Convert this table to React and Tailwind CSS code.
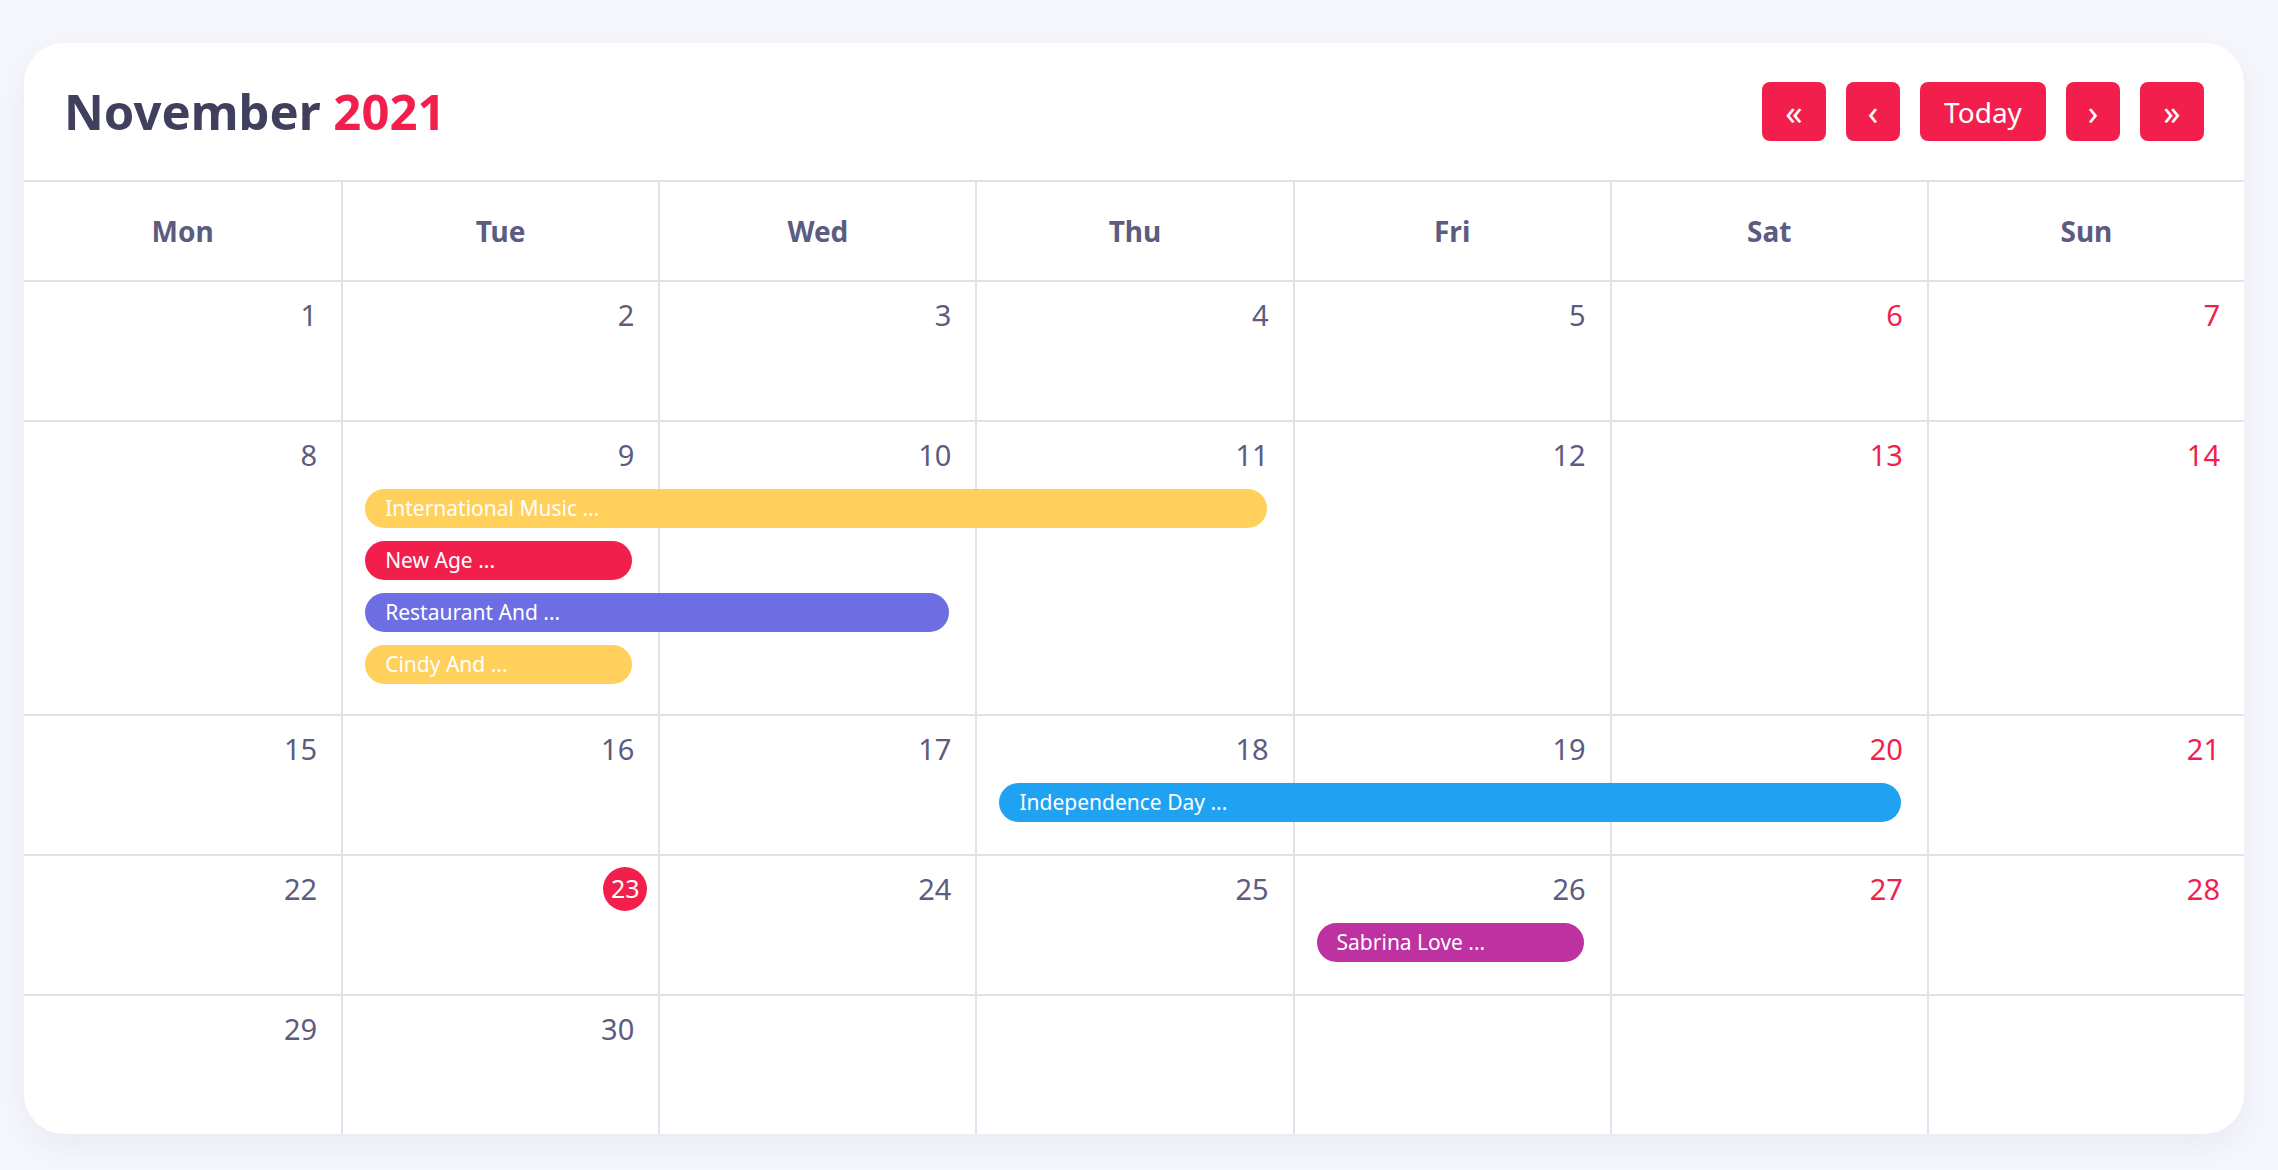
import React from "react";

const days = ["Mon", "Tue", "Wed", "Thu", "Fri", "Sat", "Sun"];

const weeks = [
  { dates: [1, 2, 3, 4, 5, 6, 7], lanes: [] },
  {
    dates: [8, 9, 10, 11, 12, 13, 14],
    lanes: [
      { title: "International Music ...", color: "bg-[#ffd05c]", start: 1, span: 3 },
      { title: "New Age ...", color: "bg-[#f21f4d]", start: 1, span: 1 },
      { title: "Restaurant And ...", color: "bg-[#6d6de4]", start: 1, span: 2 },
      { title: "Cindy And ...", color: "bg-[#ffd05c]", start: 1, span: 1 },
    ],
  },
  {
    dates: [15, 16, 17, 18, 19, 20, 21],
    lanes: [{ title: "Independence Day ...", color: "bg-[#20a2f2]", start: 3, span: 3 }],
  },
  {
    dates: [22, 23, 24, 25, 26, 27, 28],
    lanes: [{ title: "Sabrina Love ...", color: "bg-[#bd31a1]", start: 4, span: 1 }],
  },
  { dates: [29, 30, null, null, null, null, null], lanes: [] },
];

const colStart = ["col-start-1", "col-start-2", "col-start-3", "col-start-4", "col-start-5", "col-start-6", "col-start-7"];
const colSpan = ["", "col-span-1", "col-span-2", "col-span-3", "col-span-4"];

const TODAY = 23;

const NavButton = ({ children, width, size = "text-[28px]" }) => (
  <button className={`${width} ${size} h-[59px] rounded-[8px] bg-[#f21f4d] text-white flex items-center justify-center leading-none`}>
    {children}
  </button>
);

const DayNumber = ({ date, weekend }) => {
  if (date === null) return <div className="h-[40px]" />;
  if (date === TODAY) {
    return (
      <div className="flex justify-end h-[40px] items-center">
        <span className="w-[44px] h-[44px] -mr-[13px] rounded-full bg-[#f21f4d] text-white text-[25px] flex items-center justify-center">
          {date}
        </span>
      </div>
    );
  }
  return (
    <div className={`text-right text-[29px] leading-[40px] ${weekend ? "text-[#f21f4d]" : "text-[#5c5b80]"}`}>
      {date}
    </div>
  );
};

const Week = ({ week }) => (
  <div className="relative border-t-2 border-[#dfe3e8] min-h-[140px]">
    <div className="absolute inset-0 grid grid-cols-7">
      {days.map((d, i) => (
        <div key={d} className={i === 0 ? "" : "border-l-2 border-[#dfe3e8]"} />
      ))}
    </div>
    <div className="relative grid grid-cols-7 pt-[13px]">
      {week.dates.map((date, i) => (
        <div key={i} className="pr-[24px]">
          <DayNumber date={date} weekend={i >= 5} />
        </div>
      ))}
    </div>
    {week.lanes.length > 0 && (
      <div className="relative flex flex-col gap-[13px] pt-[14px] pb-[30px]">
        {week.lanes.map((ev) => (
          <div key={ev.title} className="grid grid-cols-7">
            <div
              className={`${colStart[ev.start]} ${colSpan[ev.span]} ${ev.color} ml-[24px] mr-[26px] h-[39px] rounded-full pl-[20px] text-white text-[21px] leading-[39px] whitespace-nowrap overflow-hidden`}
            >
              {ev.title}
            </div>
          </div>
        ))}
      </div>
    )}
  </div>
);

export default function App() {
  return (
    <div className="min-h-[1170px] bg-[#f6f7fc] pl-[24px] pt-[43px] pb-[35px] font-['Noto_Sans',sans-serif]">
      <div className="w-[2220px] bg-white rounded-[40px] overflow-hidden shadow-[0_12px_30px_rgba(80,80,140,0.08)]">
        <div className="h-[137px] px-[40px] flex items-center justify-between">
          <h1 className="text-[49px] font-bold leading-none text-[#413f5e]">
            November <span className="text-[#f21f4d]">2021</span>
          </h1>
          <div className="flex gap-[20px]">
            <NavButton width="w-[64px]" size="text-[34px]">«</NavButton>
            <NavButton width="w-[54px]" size="text-[34px]">‹</NavButton>
            <NavButton width="w-[126px]">Today</NavButton>
            <NavButton width="w-[54px]" size="text-[34px]">›</NavButton>
            <NavButton width="w-[64px]" size="text-[34px]">»</NavButton>
          </div>
        </div>
        <div className="grid grid-cols-7 border-t-2 border-[#dfe3e8]">
          {days.map((d, i) => (
            <div
              key={d}
              className={`h-[98px] flex items-center justify-center text-[28px] font-bold text-[#5c5b80] ${i === 0 ? "" : "border-l-2 border-[#dfe3e8]"}`}
            >
              {d}
            </div>
          ))}
        </div>
        {weeks.map((w, i) => (
          <Week key={i} week={w} />
        ))}
      </div>
    </div>
  );
}
